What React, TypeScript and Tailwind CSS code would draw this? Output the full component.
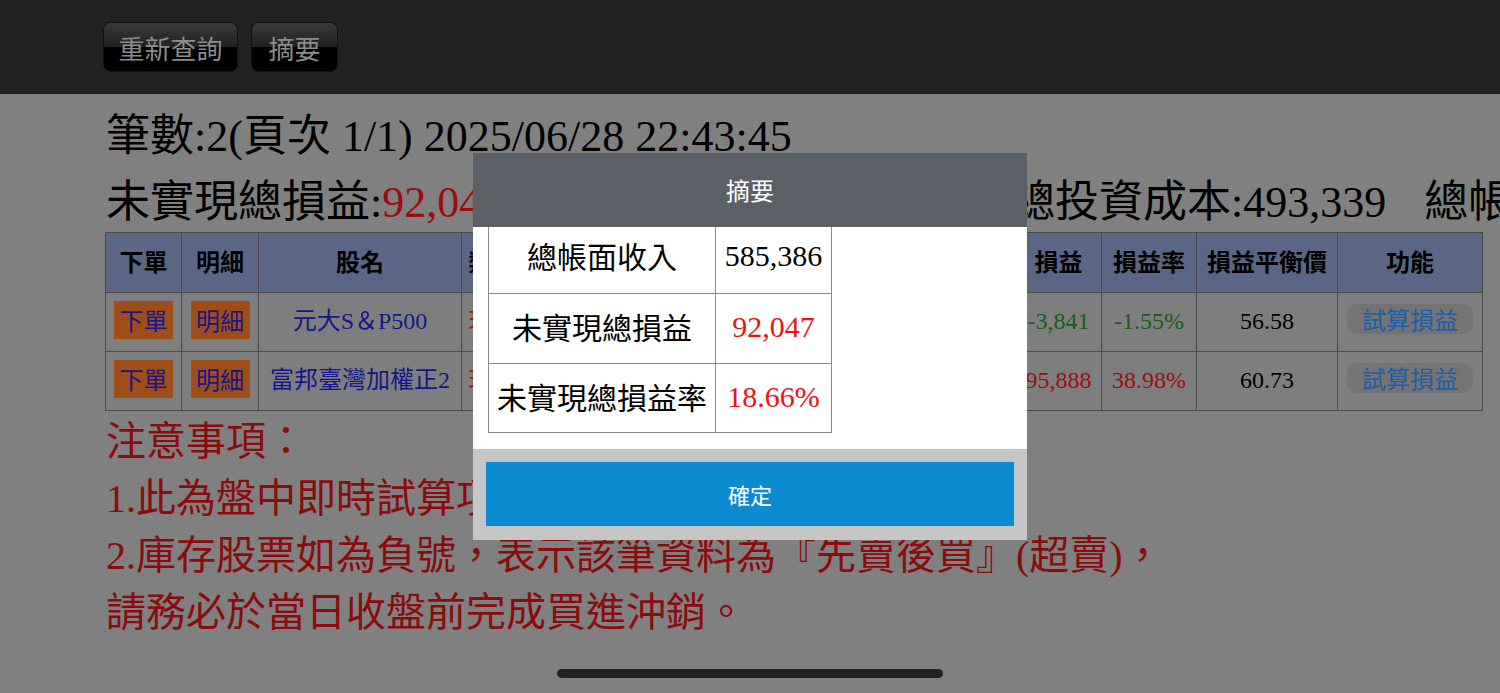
import React from "react";

// Summary page as seen with the popup open (background already dimmed)
const SERIF = "font-['Liberation_Serif','Noto_Sans_CJK_TC',serif]";
const SANS = "font-['Noto_Sans_CJK_TC','Noto_Sans',sans-serif]";

const HIDDEN_COLS = ["類別", "庫存", "成本均價", "現價", "市值"];

const ROWS = [
  {
    name: "元大S＆P500",
    hidden: ["現股", "1,000", "59.28", "58.37", "58,370"],
    pl: "-3,841",
    rate: "-1.55%",
    breakEven: "56.58",
    up: false,
  },
  {
    name: "富邦臺灣加權正2",
    hidden: ["現股", "3,000", "81.96", "113.9", "341,700"],
    pl: "95,888",
    rate: "38.98%",
    breakEven: "60.73",
    up: true,
  },
];

function HeaderButton({ label, width }: { label: string; width: string }) {
  return (
    <button
      className={`${width} h-[50px] rounded-[8px] border border-[#111] bg-[linear-gradient(to_bottom,#3a3a3a_0%,#202020_50%,#000_50%,#000_100%)] text-[26px] text-[#8c8c8c] ${SANS} flex items-center justify-center`}
    >
      {label}
    </button>
  );
}

function OrangeTag({ label }: { label: string }) {
  return (
    <span
      className={`inline-flex h-[38px] w-[59px] items-center justify-center bg-[#9f4e19] text-[24px] text-[#16168c] ${SANS}`}
    >
      {label}
    </span>
  );
}

export default function App() {
  return (
    <div className="relative h-[693px] w-[1500px] overflow-hidden bg-[#808080]">
      {/* Top bar */}
      <div className="flex h-[94px] items-center gap-[13px] bg-[#212121] pl-[103px]">
        <HeaderButton label="重新查詢" width="w-[135px]" />
        <HeaderButton label="摘要" width="w-[87px]" />
      </div>

      {/* Page body */}
      <div className={`pl-[106px] pt-[13px] ${SERIF} text-black`}>
        <div className="whitespace-nowrap text-[44px] leading-[60px]">
          筆數:2(頁次 1/1) 2025/06/28 22:43:45
        </div>
        <div className="mt-[6px] whitespace-nowrap text-[44px] leading-[60px]">
          未實現總損益:<span className="text-[#9e0d0d]">92,047</span>
          <span className="ml-[30px]">未實現總損益率:</span>
          <span className="text-[#9e0d0d]">18.66%</span>
          <span className="ml-[22px]">總投資成本:493,339</span>
          <span className="ml-[38px]">總帳面收入:585,386</span>
        </div>
      </div>

      <table className="-mt-px ml-[105px] w-[1377px] table-fixed border-collapse">
        <colgroup>
          <col className="w-[76px]" />
          <col className="w-[77px]" />
          <col className="w-[203px]" />
          <col className="w-[62px]" />
          <col className="w-[110px]" />
          <col className="w-[120px]" />
          <col className="w-[120px]" />
          <col className="w-[142px]" />
          <col className="w-[86px]" />
          <col className="w-[95px]" />
          <col className="w-[141px]" />
          <col className="w-[145px]" />
        </colgroup>
        <thead>
          <tr className={`h-[60px] bg-[#5b6684] text-[24px] font-bold text-black ${SANS}`}>
            {["下單", "明細", "股名", ...HIDDEN_COLS, "損益", "損益率", "損益平衡價", "功能"].map(
              (h) => (
                <th key={h} className="border border-[#4a4a4a] p-0 pb-[3px] text-center font-bold">
                  {h}
                </th>
              )
            )}
          </tr>
        </thead>
        <tbody className={`${SERIF} text-[24px]`}>
          {ROWS.map((r) => {
            const color = r.up ? "text-[#9e0d0d]" : "text-[#195c19]";
            return (
              <tr key={r.name} className="h-[59px] bg-[#7e7e7e]">
                <td className="border border-[#4a4a4a] pb-[3px] text-center">
                  <OrangeTag label="下單" />
                </td>
                <td className="border border-[#4a4a4a] pb-[3px] text-center">
                  <OrangeTag label="明細" />
                </td>
                <td className="border border-[#4a4a4a] pb-[3px] text-center text-[#16168c]">{r.name}</td>
                {r.hidden.map((v, i) => (
                  <td
                    key={i}
                    className={`border border-[#4a4a4a] text-center ${i === 0 ? "text-[#9e0d0d]" : "text-black"}`}
                  >
                    {v}
                  </td>
                ))}
                <td className={`border border-[#4a4a4a] pb-[3px] text-center ${color}`}>{r.pl}</td>
                <td className={`border border-[#4a4a4a] pb-[3px] text-center ${color}`}>{r.rate}</td>
                <td className="border border-[#4a4a4a] pb-[3px] text-center text-black">{r.breakEven}</td>
                <td className="border border-[#4a4a4a] pb-[3px] text-center">
                  <span
                    className={`inline-flex h-[30px] w-[126px] items-center justify-center rounded-[10px] bg-[#747474] text-[24px] text-[#1f5ea6] ${SANS}`}
                  >
                    試算損益
                  </span>
                </td>
              </tr>
            );
          })}
        </tbody>
      </table>

      {/* Notes */}
      <div className={`mt-[2px] pl-[106px] text-[40px] leading-[57px] text-[#8a0c0c] ${SERIF} whitespace-nowrap`}>
        <div>注意事項：</div>
        <div>1.此為盤中即時試算項目，僅供參考。</div>
        <div>2.庫存股票如為負號，表示該筆資料為『先賣後買』(超賣)，</div>
        <div>請務必於當日收盤前完成買進沖銷。</div>
      </div>

      {/* Summary popup */}
      <div className="absolute left-[473px] top-[153px] w-[554px]">
        <div className={`flex h-[74px] items-center justify-center bg-[#5b6067] text-[24px] text-white ${SANS}`}>
          摘要
        </div>
        <div className="h-[222px] overflow-hidden bg-white pl-[15px]">
          <table className="-mt-[6px] w-[343px] table-fixed border-collapse">
            <colgroup>
              <col className="w-[227px]" />
              <col className="w-[116px]" />
            </colgroup>
            <tbody className="text-[30px]">
              {[
                ["總帳面收入", "585,386", "text-black", "h-[72px]"],
                ["未實現總損益", "92,047", "text-[#ee1111]", "h-[70px]"],
                ["未實現總損益率", "18.66%", "text-[#ee1111]", "h-[69px]"],
              ].map(([label, value, c, h]) => (
                <tr key={label} className={h}>
                  <td className={`border border-[#8a8a8a] pb-[4px] text-center text-black ${SANS}`}>{label}</td>
                  <td className={`border border-[#8a8a8a] pb-[4px] text-center ${c} ${SERIF}`}>{value}</td>
                </tr>
              ))}
            </tbody>
          </table>
        </div>
        <div className="h-[91px] bg-[#c6c6c6] p-[13px]">
          <button
            className={`flex h-[64px] w-full items-center justify-center bg-[#0d8bd0] text-[22px] text-white ${SANS}`}
          >
            確定
          </button>
        </div>
      </div>

      {/* Home indicator */}
      <div className="absolute left-[557px] top-[669px] h-[9px] w-[386px] rounded-full bg-[#222]" />
    </div>
  );
}
